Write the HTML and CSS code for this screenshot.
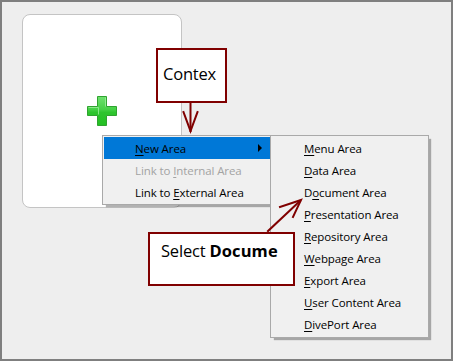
FILE: index.html
```html
<!DOCTYPE html>
<html>
<head>
<meta charset="utf-8">
<link rel="stylesheet" href="styles.css">
</head>
<body>
<div class="frame">
  <div class="card">
    <svg class="plus" width="30" height="30" viewBox="0 0 30 30">
      <defs>
        <linearGradient id="g" x1="0" y1="0" x2="0" y2="1">
          <stop offset="0" stop-color="#6fe06f"/>
          <stop offset="0.45" stop-color="#44d044"/>
          <stop offset="0.55" stop-color="#2ec42e"/>
          <stop offset="1" stop-color="#22c022"/>
        </linearGradient>
      </defs>
      <path d="M10.5 0.5h9v10h10v9h-10v10h-9v-10h-10v-9h10z" fill="url(#g)" stroke="#2fa32f" stroke-width="1"/>
      <path d="M11.5 18.5v-7h-10M18.5 1.5v9" fill="none" stroke="#9cee9c" stroke-width="1" opacity="0.8"/>
    </svg>
  </div>

  <div class="menu main-menu">
    <div class="item active"><span><u>N</u>ew Area</span><span class="sub-arrow"></span></div>
    <div class="item disabled"><span>Link to <u>I</u>nternal Area</span></div>
    <div class="item"><span>Link to <u>E</u>xternal Area</span></div>
  </div>

  <div class="menu sub-menu">
    <div class="item"><span><u>M</u>enu Area</span></div>
    <div class="item"><span><u>D</u>ata Area</span></div>
    <div class="item"><span>D<u>o</u>cument Area</span></div>
    <div class="item"><span><u>P</u>resentation Area</span></div>
    <div class="item"><span><u>R</u>epository Area</span></div>
    <div class="item"><span><u>W</u>ebpage Area</span></div>
    <div class="item"><span><u>E</u>xport Area</span></div>
    <div class="item"><span><u>U</u>ser Content Area</span></div>
    <div class="item"><span><u>D</u>ivePort Area</span></div>
  </div>

  <svg class="arrows" width="453" height="361" viewBox="0 0 453 361">
    <g stroke="#800000" stroke-width="2" fill="none" stroke-linecap="square">
      <line x1="190.5" y1="102" x2="190.5" y2="131"/>
      <polyline points="183.5,112 190.5,131 197.5,112"/>
      <line x1="268" y1="231" x2="300" y2="201"/>
      <polyline points="280,207 301,200 293,217"/>
    </g>
  </svg>

  <div class="callout callout-top">Contex</div>
  <div class="callout callout-bottom">Select <b>Docume</b></div>
</div>
</body>
</html>
```
FILE: styles.css
```css
html, body {
  margin: 0;
  padding: 0;
}
body {
  width: 453px;
  height: 361px;
  overflow: hidden;
  font-family: "Open Sans", "Noto Sans", sans-serif;
}
.frame {
  position: relative;
  box-sizing: border-box;
  width: 453px;
  height: 361px;
  border: 2px solid #7f7f7f;
  background: #eeeeee;
  padding: 12px 0 0 20px;
}
.card {
  box-sizing: border-box;
  width: 160px;
  height: 194px;
  background: #ffffff;
  border: 1.5px solid #c4c4c4;
  border-radius: 8px;
  display: flex;
  align-items: center;
  justify-content: center;
}
.plus {
  display: block;
}
.menu {
  position: absolute;
  box-sizing: border-box;
  background: #f0f0f0;
  border: 1px solid #a9a9a9;
  box-shadow: 3px 3px 1px -1px rgba(0, 0, 0, 0.3);
  font-size: 11.5px;
  color: #000;
  display: flex;
  flex-direction: column;
}
.main-menu {
  left: 100px;
  top: 133px;
  width: 169px;
  height: 70px;
  padding: 1px 0 0 1px;
}
.sub-menu {
  left: 268px;
  top: 133px;
  width: 159px;
  height: 203px;
  padding: 1px 0 0 0;
  z-index: 2;
}
.item {
  height: 22px;
  display: flex;
  align-items: center;
  justify-content: space-between;
  padding-left: 31px;
  padding-right: 8px;
  letter-spacing: -0.1px;
}
.sub-menu .item {
  padding-left: 33px;
}
.item.active {
  background: #0078d7;
  color: #000;
}
.item.disabled {
  color: #a3a3a3;
}
.item u {
  text-decoration-thickness: 1px;
  text-underline-offset: 2px;
}
.sub-arrow {
  width: 0;
  height: 0;
  border-top: 4px solid transparent;
  border-bottom: 4px solid transparent;
  border-left: 4px solid #000;
}
.arrows {
  position: absolute;
  left: -2px;
  top: -2px;
  z-index: 3;
}
.callout {
  position: absolute;
  box-sizing: border-box;
  background: #fff;
  border: 2px solid #800000;
  color: #000;
  font-size: 16.5px;
  z-index: 4;
}
.callout-top {
  left: 154px;
  top: 46px;
  width: 71px;
  height: 55px;
  padding: 12px 0 0 5px;
  letter-spacing: -0.2px;
}
.callout-bottom {
  left: 146px;
  top: 230px;
  width: 147px;
  height: 54px;
  padding: 5px 0 0 11px;
  letter-spacing: -0.2px;
}
.callout-bottom b {
  letter-spacing: 0.1px;
}
```
